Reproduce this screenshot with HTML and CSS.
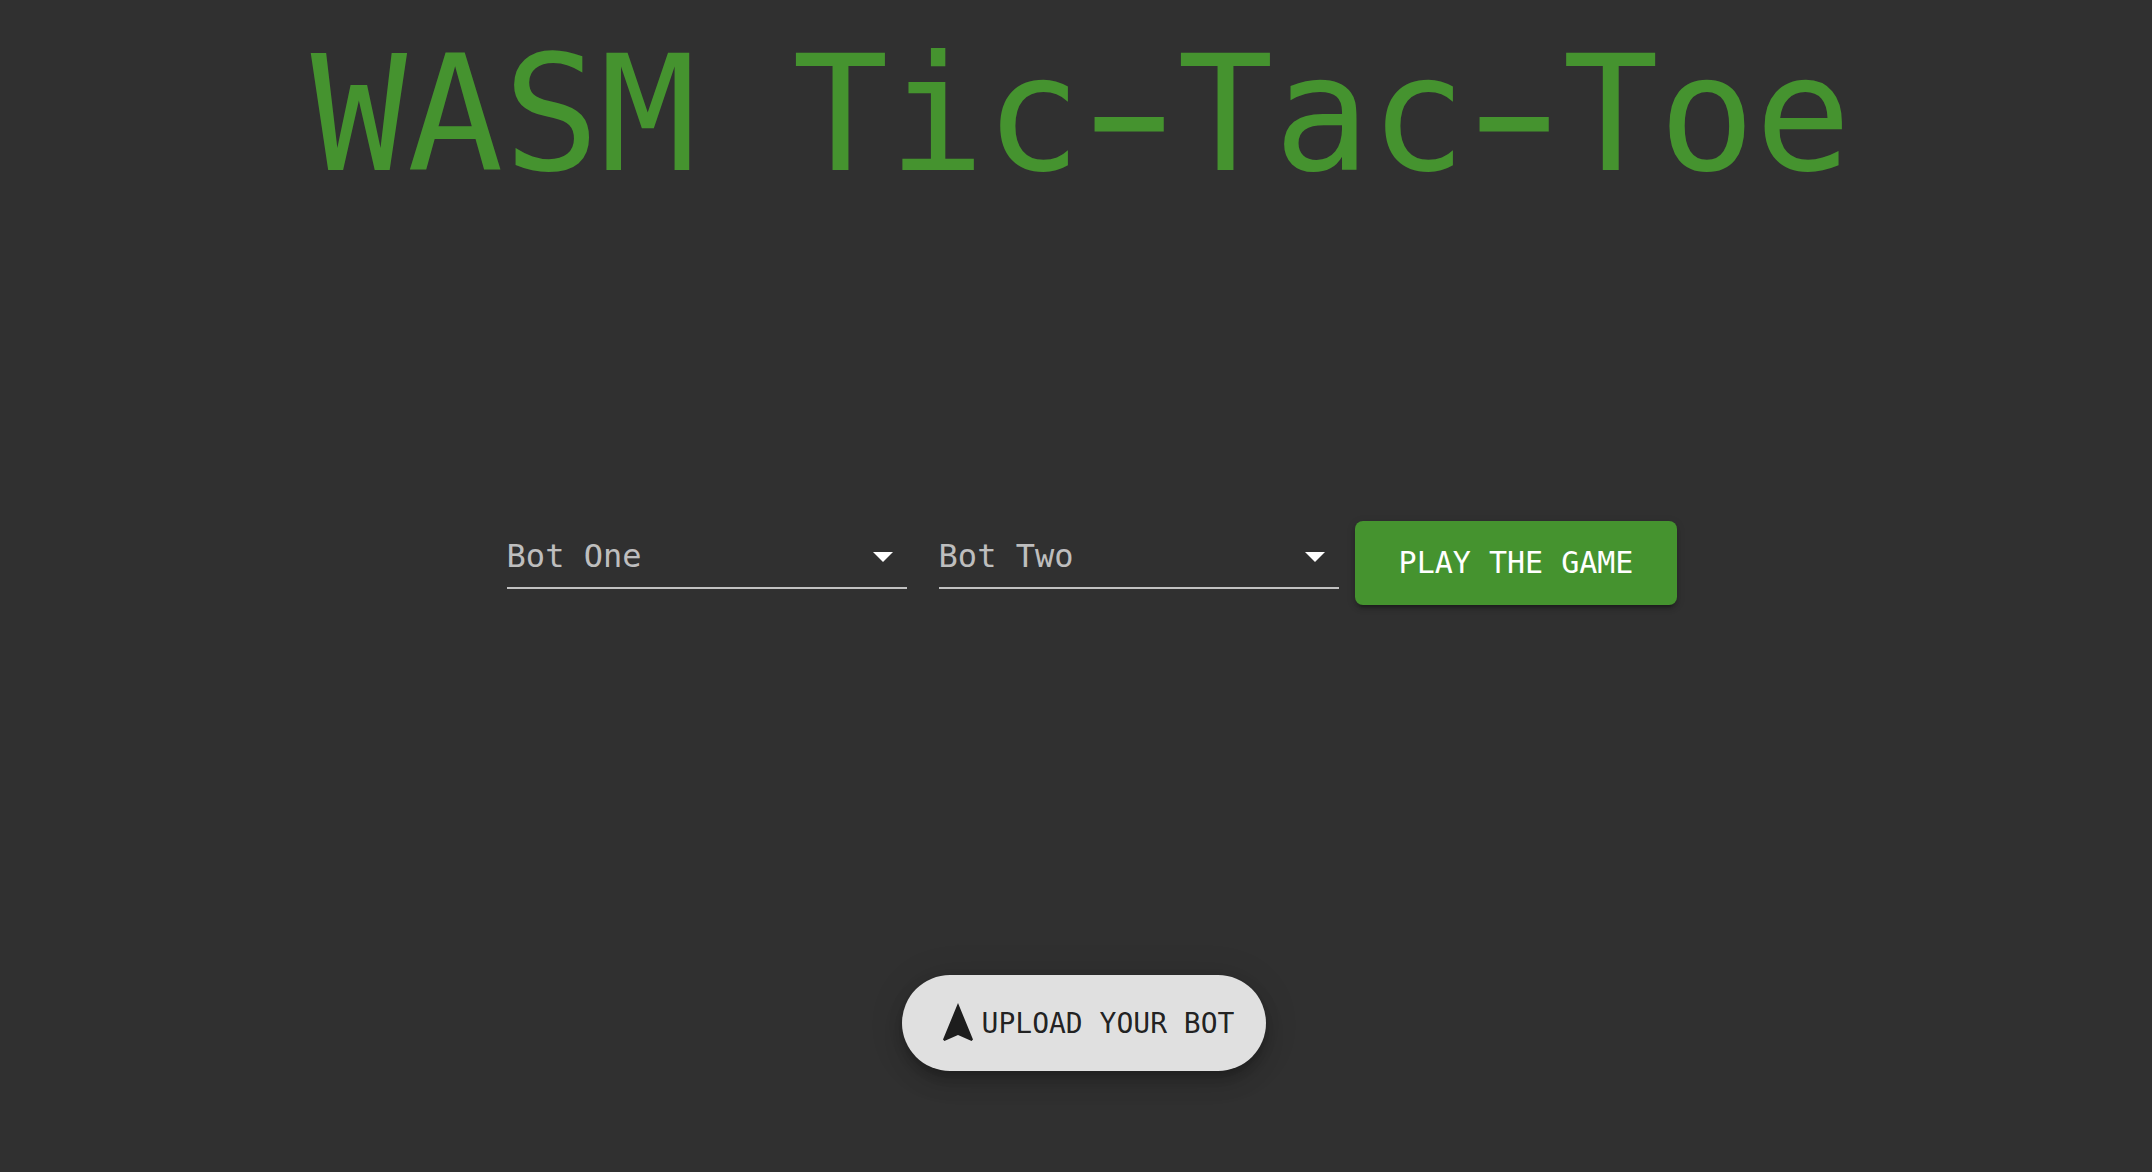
FILE: index.html
```html
<!DOCTYPE html>
<html lang="en">
<head>
<meta charset="utf-8">
<title>WASM Tic-Tac-Toe</title>
<link rel="stylesheet" href="styles.css">
</head>
<body>
  <main class="app">
    <h1 class="title">WASM Tic<span class="dash">−</span>Tac<span class="dash">−</span>Toe</h1>
    <div class="controls">
      <div class="select">
        <span class="select-label">Bot One</span>
        <svg class="select-icon" viewBox="0 0 24 24" aria-hidden="true"><path d="M7 10l5 5 5-5z"/></svg>
      </div>
      <div class="select">
        <span class="select-label">Bot Two</span>
        <svg class="select-icon" viewBox="0 0 24 24" aria-hidden="true"><path d="M7 10l5 5 5-5z"/></svg>
      </div>
      <button class="play-btn" type="button">PLAY THE GAME</button>
    </div>
    <div class="upload-wrap">
      <button class="upload-fab" type="button">
        <svg class="fab-icon" viewBox="0 0 24 24" aria-hidden="true"><path d="M12 2L4.5 20.29l.71.71L12 18l6.79 3 .71-.71z"/></svg>
        <span>UPLOAD YOUR BOT</span>
      </button>
    </div>
  </main>
</body>
</html>
```
FILE: styles.css
```css
html, body {
  margin: 0;
  padding: 0;
}
body {
  background: #303030;
  min-height: 100vh;
  font-family: "DejaVu Sans Mono", monospace;
}
.app {
  display: flex;
  flex-direction: column;
}
.title {
  margin: 22px 0 0 0;
  padding-left: 10px;
  text-align: center;
  font-family: "DejaVu Sans Mono", monospace;
  font-size: 160px;
  font-weight: normal;
  line-height: 186px;
  color: #45932f;
}
.dash {
  display: inline-block;
  font-size: 134px;
  line-height: 1;
  margin: 0 7.7px;
  transform: translateY(-5px) scaleY(1.3);
}
.controls {
  margin-top: 285px;
  padding-left: 16px;
  display: flex;
  justify-content: center;
  align-items: flex-start;
}
.select {
  position: relative;
  box-sizing: border-box;
  width: 400px;
  height: 96px;
  margin: 0 16px;
  padding-top: 44px;
  border-bottom: 2px solid rgba(255, 255, 255, 0.7);
}
.select-label {
  display: block;
  font-size: 32px;
  line-height: 38px;
  color: rgba(255, 255, 255, 0.7);
}
.select-icon {
  position: absolute;
  right: 0;
  top: 39px;
  width: 48px;
  height: 48px;
  fill: #ffffff;
}
.play-btn {
  margin-top: 28px;
  box-sizing: border-box;
  height: 84px;
  padding: 16px 44px;
  border: none;
  border-radius: 8px;
  background: #45932f;
  color: #ffffff;
  font-family: "DejaVu Sans Mono", monospace;
  font-size: 30px;
  line-height: 1.75;
  box-shadow: 0 6px 2px -4px rgba(0,0,0,0.2), 0 4px 4px 0 rgba(0,0,0,0.14), 0 2px 10px 0 rgba(0,0,0,0.12);
  cursor: pointer;
}
.upload-wrap {
  margin-top: 370px;
  padding-left: 16px;
  display: flex;
  justify-content: center;
}
.upload-fab {
  display: flex;
  align-items: center;
  box-sizing: border-box;
  height: 96px;
  padding: 0 32px;
  border: none;
  border-radius: 48px;
  background: #e0e0e0;
  color: rgba(0, 0, 0, 0.87);
  font-family: "DejaVu Sans Mono", monospace;
  font-size: 28px;
  line-height: 1.75;
  box-shadow: 0 6px 10px -2px rgba(0,0,0,0.2), 0 12px 20px 0 rgba(0,0,0,0.14), 0 2px 36px 0 rgba(0,0,0,0.12);
  cursor: pointer;
}
.fab-icon {
  width: 48px;
  height: 48px;
  fill: rgba(0, 0, 0, 0.87);
  flex: none;
}
```
